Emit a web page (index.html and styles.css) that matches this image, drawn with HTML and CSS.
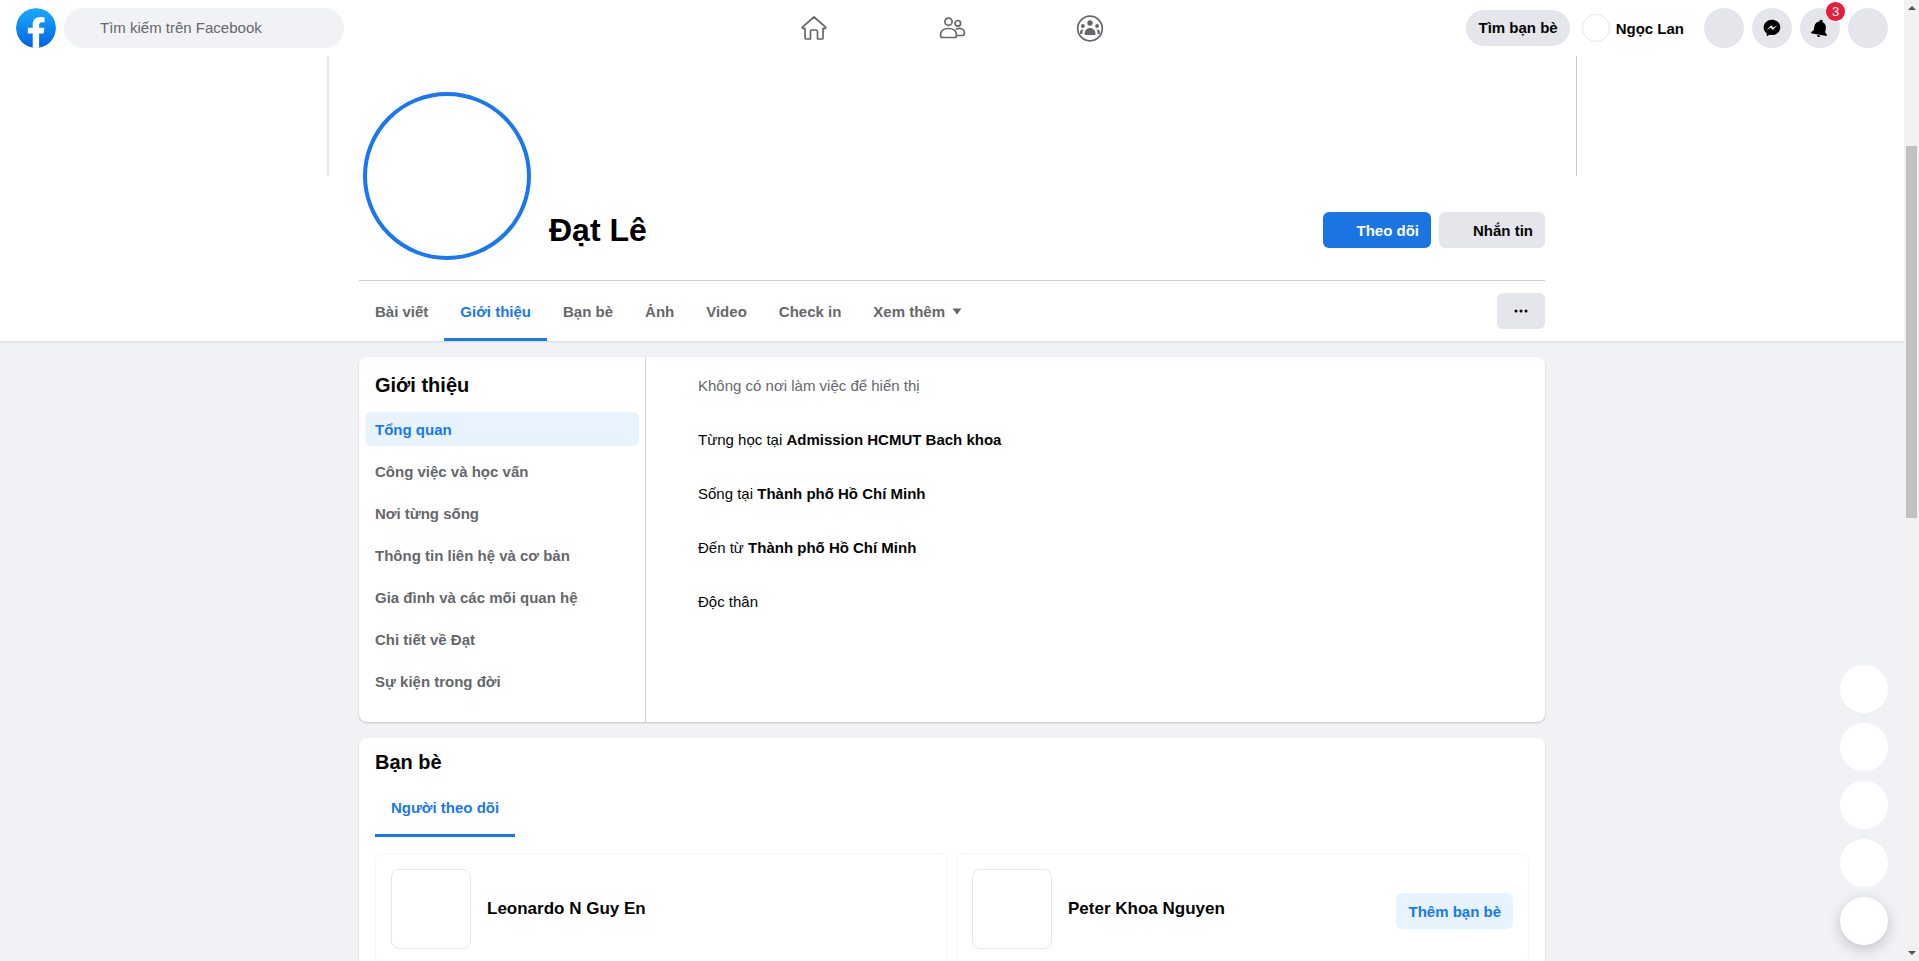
FILE: index.html
```html
<!DOCTYPE html>
<html lang="vi">
<head>
<meta charset="utf-8">
<title>Đạt Lê | Facebook</title>
<link rel="stylesheet" href="styles.css">
</head>
<body>
<div class="page">
  <header class="topbar">
    <div class="top-left">
      <svg class="logo" viewBox="0 0 40 40" width="40" height="40">
        <defs><linearGradient id="fbg" x1="0" y1="0" x2="0" y2="1"><stop offset="0" stop-color="#18acfe"/><stop offset="1" stop-color="#0163e0"/></linearGradient></defs>
        <circle cx="20" cy="20" r="20" fill="url(#fbg)"/>
        <path fill="#fff" d="M16.7 40V25.6H11.8v-5.8h4.9v-3.3c0-4.9 2.9-7.6 7.3-7.6 2.1 0 4.6.5 4.6.5v4.8h-2.4c-2.4 0-3.1 1.5-3.1 3v2.6h5.4l-.9 5.8h-4.5V40z"/>
      </svg>
      <div class="search">Tìm kiếm trên Facebook</div>
    </div>
    <nav class="top-nav">
      <a class="top-nav-item">
        <svg viewBox="0 0 28 28" width="28" height="28"><path class="line" d="M14 3 25.6 13.2q.4 1-.6 1.2h-2V24q0 1-1 1h-4.5v-7.5q0-1.5-1.5-1.5h-4q-1.5 0-1.5 1.5V25H6q-1 0-1-1v-9.600H3q-1-.2-.6-1.200Z"/></svg>
      </a>
      <a class="top-nav-item">
        <svg viewBox="0 0 28 28" width="28" height="28"><circle class="line" cx="10.500" cy="7.700" r="3.600"/><circle class="line" cx="19.800" cy="9.300" r="2.800"/><path class="line" d="M2.500 21c0-4 3.200-6.500 8-6.500s8 2.500 8 6.500q0 2.500-2 2.500h-12q-2 0-2-2.500Z"/><path class="line" d="M18.500 15c.9-.5 1.800-.7 2.800-.7 3 0 5.200 2 5.200 4.500q0 2.400-2 2.700h-5.700"/></svg>
      </a>
      <a class="top-nav-item">
        <svg viewBox="0 0 28 28" width="28" height="28"><circle class="line" cx="14" cy="14.500" r="12.300"/><g class="solid"><circle cx="14" cy="9" r="2.700"/><circle cx="6.900" cy="12" r="1.900"/><circle cx="21.100" cy="12" r="1.900"/><path d="M8.500 20c0-3.500 2.500-6 5.500-6s5.500 2.500 5.500 6q0 1-1 1h-9q-1 0-1-1Z"/><path d="M4 19c-.2-2 1-3.500 2.700-3.500h.6c-.6 1-.9 2.500-.9 4.500H4.600q-.6 0-.6-1Z"/><path d="M24 19c.2-2-1-3.500-2.700-3.500h-.6c.6 1 .9 2.500.9 4.500h1.800q.6 0 .6-1Z"/></g></svg>
      </a>
    </nav>
    <div class="top-right">
      <a class="find-friends">Tìm bạn bè</a>
      <a class="me"><span class="me-avatar"></span><span>Ngọc Lan</span></a>
      <div class="round-actions">
        <span class="round-btn"></span>
        <span class="round-btn">
          <svg viewBox="0 0 24 24" width="20" height="20"><path d="M12 2.040C6.500 2.040 2 6.140 2 11.250c0 2.900 1.440 5.480 3.700 7.170V22l3.400-1.870c.9.250 1.870.380 2.900.380 5.500 0 10-4.100 10-9.260S17.500 2.040 12 2.040zm1 12.460-2.550-2.720-4.970 2.720 5.470-5.800 2.600 2.720 4.920-2.720-5.470 5.800z"/></svg>
        </span>
        <span class="round-btn">
          <svg class="bell" viewBox="0 0 24 24" width="20" height="20"><path d="M12 23c1.100 0 2-.9 2-2h-4c0 1.100.9 2 2 2zm7-7v-4.500c0-3.500-1.900-6.200-5-7V4c0-1.100-.9-2-2-2s-2 .9-2 2v.5c-3.100.8-5 3.500-5 7V16l-2.500 2.500V20h19v-1.500L19 16z"/></svg>
          <span class="badge">3</span>
        </span>
        <span class="round-btn"></span>
      </div>
    </div>
  </header>

  <section class="profile-head">
    <div class="cover"></div>
    <div class="profile-inner">
      <div class="identity">
        <div class="avatar"></div>
        <h1 class="name">Đạt Lê</h1>
        <div class="head-actions">
          <a class="btn btn-primary"><span class="btn-icon"></span>Theo dõi</a>
          <a class="btn btn-plain"><span class="btn-icon"></span>Nhắn tin</a>
        </div>
      </div>
      <div class="tabs">
        <a class="tab">Bài viết</a>
        <a class="tab tab-active">Giới thiệu</a>
        <a class="tab">Bạn bè</a>
        <a class="tab">Ảnh</a>
        <a class="tab">Video</a>
        <a class="tab">Check in</a>
        <a class="tab">Xem thêm<svg class="caret" viewBox="0 0 10 7" width="10" height="7"><path d="M.5 .5h9L5 6.500z"/></svg></a>
        <a class="btn btn-plain btn-more">
          <svg viewBox="0 0 16 4" width="16" height="4"><circle cx="3" cy="2" r="1.500"/><circle cx="8" cy="2" r="1.500"/><circle cx="13" cy="2" r="1.500"/></svg>
        </a>
      </div>
    </div>
  </section>

  <main class="content">
    <section class="card about">
      <aside class="about-side">
        <h2 class="card-title">Giới thiệu</h2>
        <ul class="about-menu">
          <li class="about-item about-item-active">Tổng quan</li>
          <li class="about-item">Công việc và học vấn</li>
          <li class="about-item">Nơi từng sống</li>
          <li class="about-item">Thông tin liên hệ và cơ bản</li>
          <li class="about-item">Gia đình và các mối quan hệ</li>
          <li class="about-item">Chi tiết về Đạt</li>
          <li class="about-item">Sự kiện trong đời</li>
        </ul>
      </aside>
      <div class="about-main">
        <p class="fact fact-muted">Không có nơi làm việc để hiển thị</p>
        <p class="fact">Từng học tại <b>Admission HCMUT Bach khoa</b></p>
        <p class="fact">Sống tại <b>Thành phố Hồ Chí Minh</b></p>
        <p class="fact">Đến từ <b>Thành phố Hồ Chí Minh</b></p>
        <p class="fact">Độc thân</p>
      </div>
    </section>

    <section class="card friends">
      <h2 class="card-title">Bạn bè</h2>
      <div class="friend-tabs"><a class="friend-tab">Người theo dõi</a></div>
      <div class="friend-grid">
        <article class="friend">
          <div class="friend-photo"></div>
          <span class="friend-name">Leonardo N Guy En</span>
        </article>
        <article class="friend">
          <div class="friend-photo"></div>
          <span class="friend-name">Peter Khoa Nguyen</span>
          <a class="btn btn-soft">Thêm bạn bè</a>
        </article>
      </div>
    </section>
  </main>

  <div class="float-stack">
    <span class="float-btn"></span>
    <span class="float-btn"></span>
    <span class="float-btn"></span>
    <span class="float-btn"></span>
    <span class="float-btn float-btn-raised"></span>
  </div>
</div>

<div class="scrollbar">
  <span class="arrow-up"></span>
  <span class="thumb"></span>
  <span class="arrow-down"></span>
</div>
</body>
</html>
```

FILE: styles.css
```css
* { box-sizing: border-box; }

html, body { height: 100%; }

body {
  margin: 0;
  display: flex;
  overflow: hidden;
  font-family: "Liberation Sans", Arial, sans-serif;
  font-size: 15px;
  color: #050505;
  background: #f0f2f5;
}

h1, h2, p, ul { margin: 0; padding: 0; }
ul { list-style: none; }

.page {
  position: relative;
  flex: 1;
  min-width: 0;
  height: 100%;
  overflow: hidden;
}

/* top bar */
.topbar {
  display: grid;
  grid-template-columns: 1fr auto 1fr;
  align-items: center;
  height: 56px;
  padding: 0 16px;
  background: #fff;
}

.top-left { display: flex; align-items: center; gap: 8px; }
.logo { display: block; border-radius: 50%; }

.search {
  width: 280px;
  height: 40px;
  padding-left: 36px;
  border-radius: 20px;
  background: #f0f2f5;
  color: #65676b;
  line-height: 40px;
}

.top-nav { display: flex; }
.top-nav-item { display: flex; justify-content: center; width: 138px; }
.top-nav-item svg { display: block; }
.line { fill: none; stroke: #65676b; stroke-width: 1.700; stroke-linejoin: round; stroke-linecap: round; }
.solid { fill: #65676b; }

.top-right { display: flex; align-items: center; justify-content: flex-end; }

.find-friends {
  height: 36px;
  padding: 0 12px;
  border-radius: 18px;
  background: #e4e6eb;
  font-weight: 700;
  line-height: 36px;
}

.me {
  display: flex;
  align-items: center;
  gap: 6px;
  margin-left: 12px;
  font-weight: 700;
}

.me-avatar {
  width: 28px;
  height: 28px;
  border: 1px solid #e4e6eb;
  border-radius: 50%;
}

.round-actions { display: flex; gap: 8px; margin-left: 20px; }

.round-btn {
  position: relative;
  display: flex;
  align-items: center;
  justify-content: center;
  width: 40px;
  height: 40px;
  border-radius: 50%;
  background: #e4e6eb;
}

.bell { transform: rotate(10deg); }

.badge {
  position: absolute;
  top: -6px;
  right: -5px;
  width: 19px;
  height: 19px;
  border-radius: 50%;
  background: #e41e3f;
  color: #fff;
  font-size: 13px;
  line-height: 19px;
  text-align: center;
}

/* profile header */
.profile-head {
  position: relative;
  background: #fff;
  box-shadow: 0 1px 2px rgba(0, 0, 0, .1);
}

.cover {
  width: 1250px;
  height: 120px;
  margin: 0 auto;
  border-left: 2px solid #e6e6e6;
  border-right: 1px solid #ccc;
}

.profile-inner { width: 1186px; margin: 0 auto; }

.identity {
  display: flex;
  align-items: flex-end;
  margin-top: -84px;
  padding: 0 0 20px 4px;
  border-bottom: 1px solid #ced0d4;
  height: 189px;
}

.avatar {
  flex: none;
  width: 168px;
  height: 168px;
  border: 4px solid #1877f2;
  border-radius: 50%;
  background: #fff;
}

.name {
  margin: 0 0 11px 18px;
  font-size: 32px;
  line-height: 38px;
  font-weight: 700;
  color: #000;
}

.head-actions { display: flex; gap: 8px; margin: 0 0 12px auto; }

.btn {
  display: inline-flex;
  align-items: center;
  justify-content: center;
  height: 36px;
  padding: 0 12px;
  border-radius: 6px;
  font-weight: 700;
  white-space: nowrap;
}

.btn-icon { width: 16px; height: 16px; margin-right: 6px; }
.btn-primary { background: #1b74e4; color: #fff; }
.btn-plain { background: #e4e6eb; color: #050505; }
.btn-soft { margin: 4px 0 0 auto; background: #e7f3ff; color: #1877f2; }

.btn-more { width: 48px; margin-left: auto; padding: 0; align-self: center; }
.btn-more svg { display: block; fill: #050505; }

.tabs { display: flex; height: 60px; }

.tab {
  display: flex;
  align-items: center;
  padding: 0 16px;
  color: #65676b;
  font-weight: 700;
}

.tab-active { color: #1877f2; border-bottom: 3px solid #1877f2; padding-top: 3px; }
.caret { margin-left: 7px; fill: #65676b; }

/* content */
.content {
  display: flex;
  flex-direction: column;
  gap: 16px;
  width: 1186px;
  margin: 16px auto 0;
}

.card {
  border-radius: 8px;
  background: #fff;
  box-shadow: 0 1px 2px rgba(0, 0, 0, .2);
}

.card-title {
  padding-left: 16px;
  font-size: 20px;
  line-height: 24px;
  font-weight: 700;
}

.about { display: flex; height: 365px; }

.about-side {
  flex: none;
  width: 287px;
  padding-top: 16px;
  border-right: 1px solid #ced0d4;
}

.about-menu {
  display: flex;
  flex-direction: column;
  gap: 8px;
  margin-top: 15px;
  padding: 0 6px;
}

.about-item {
  height: 34px;
  padding-left: 10px;
  border-radius: 6px;
  color: #65676b;
  font-weight: 700;
  line-height: 36px;
}

.about-item-active { background: #e7f3ff; color: #1877f2; }

.about-main { flex: 1; padding: 2px 0 0 52px; }
.fact { line-height: 54px; color: #050505; }
.fact-muted { color: #65676b; }

.friends { padding: 12px 0 0; height: 260px; }

.friend-tabs { display: flex; margin: 5px 16px 0; }

.friend-tab {
  display: flex;
  align-items: center;
  height: 58px;
  padding: 1px 16px 0;
  border-bottom: 3px solid #1877f2;
  color: #1877f2;
  font-weight: 700;
}

.friend-grid {
  display: grid;
  grid-template-columns: 1fr 1fr;
  gap: 8px;
  margin: 16px 16px 0;
}

.friend {
  display: flex;
  align-items: center;
  height: 112px;
  padding: 0 15px;
  border: 1px solid #f5f5f5;
  border-radius: 8px;
}

.friend-photo {
  flex: none;
  width: 80px;
  height: 80px;
  margin-right: 16px;
  border: 1px solid #e4e6eb;
  border-radius: 8px;
}

.friend-name { font-size: 17px; font-weight: 700; }

/* floating buttons */
.float-stack {
  position: absolute;
  right: 16px;
  bottom: 16px;
  display: flex;
  flex-direction: column;
  gap: 10px;
}

.float-btn { width: 48px; height: 48px; border-radius: 50%; background: #fff; }
.float-btn-raised { box-shadow: 0 4px 14px rgba(0, 0, 0, .2); }

/* scrollbar */
.scrollbar {
  flex: none;
  display: flex;
  flex-direction: column;
  align-items: center;
  width: 15px;
  height: 100%;
  background: #f1f1f1;
}

.arrow-up,
.arrow-down { flex: none; width: 8px; height: 4px; border-left: 4px solid transparent; border-right: 4px solid transparent; }
.arrow-up { margin-top: 6px; border-bottom: 4px solid #505050; }
.arrow-down { margin-top: auto; margin-bottom: 6px; border-top: 4px solid #505050; }
.thumb { flex: none; width: 11px; height: 372px; margin-top: 136px; background: #c1c1c1; }
```
